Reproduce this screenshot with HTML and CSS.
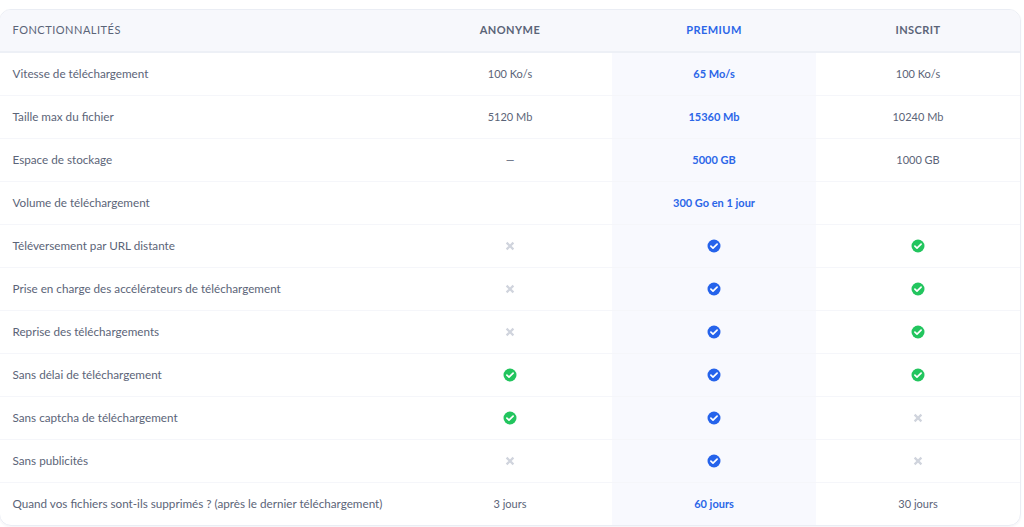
FILE: index.html
```
<!DOCTYPE html>
<html>
<head>
    <meta charset="utf-8">
    <link rel="stylesheet" href="styles.css">
</head>
<body>
    <svg class="defs" width="0" height="0">
        <symbol id="check" viewBox="0 0 14 14">
            <circle cx="7" cy="7" r="6.5" fill="currentColor"/>
            <path d="M3.9 7.2 6 9.2 10.1 5.2" fill="none" stroke="#fff" stroke-width="1.7" stroke-linecap="round" stroke-linejoin="round"/>
        </symbol>
        <symbol id="cross" viewBox="0 0 10 10">
            <path d="M1.6 1.6 8.4 8.4M8.4 1.6 1.6 8.4" fill="none" stroke="currentColor" stroke-width="2.2"/>
        </symbol>
    </svg>

    <div class="wrap">
        <table class="compare">
            <thead>
                <tr>
                    <th class="feature">FONCTIONNALITÉS</th>
                    <th>ANONYME</th>
                    <th class="premium">PREMIUM</th>
                    <th>INSCRIT</th>
                </tr>
            </thead>
            <tbody>
                <tr>
                    <td class="feature">Vitesse de téléchargement</td>
                    <td>100 Ko/s</td>
                    <td class="premium">65 Mo/s</td>
                    <td>100 Ko/s</td>
                </tr>
                <tr>
                    <td class="feature">Taille max du fichier</td>
                    <td>5120 Mb</td>
                    <td class="premium">15360 Mb</td>
                    <td>10240 Mb</td>
                </tr>
                <tr>
                    <td class="feature">Espace de stockage</td>
                    <td>—</td>
                    <td class="premium">5000 GB</td>
                    <td>1000 GB</td>
                </tr>
                <tr>
                    <td class="feature">Volume de téléchargement</td>
                    <td></td>
                    <td class="premium">300 Go en 1 jour</td>
                    <td></td>
                </tr>
                <tr>
                    <td class="feature">Téléversement par URL distante</td>
                    <td><svg class="icon no"><use href="#cross"/></svg></td>
                    <td class="premium"><svg class="icon yes"><use href="#check"/></svg></td>
                    <td><svg class="icon yes"><use href="#check"/></svg></td>
                </tr>
                <tr>
                    <td class="feature">Prise en charge des accélérateurs de téléchargement</td>
                    <td><svg class="icon no"><use href="#cross"/></svg></td>
                    <td class="premium"><svg class="icon yes"><use href="#check"/></svg></td>
                    <td><svg class="icon yes"><use href="#check"/></svg></td>
                </tr>
                <tr>
                    <td class="feature">Reprise des téléchargements</td>
                    <td><svg class="icon no"><use href="#cross"/></svg></td>
                    <td class="premium"><svg class="icon yes"><use href="#check"/></svg></td>
                    <td><svg class="icon yes"><use href="#check"/></svg></td>
                </tr>
                <tr>
                    <td class="feature">Sans délai de téléchargement</td>
                    <td><svg class="icon yes"><use href="#check"/></svg></td>
                    <td class="premium"><svg class="icon yes"><use href="#check"/></svg></td>
                    <td><svg class="icon yes"><use href="#check"/></svg></td>
                </tr>
                <tr>
                    <td class="feature">Sans captcha de téléchargement</td>
                    <td><svg class="icon yes"><use href="#check"/></svg></td>
                    <td class="premium"><svg class="icon yes"><use href="#check"/></svg></td>
                    <td><svg class="icon no"><use href="#cross"/></svg></td>
                </tr>
                <tr>
                    <td class="feature">Sans publicités</td>
                    <td><svg class="icon no"><use href="#cross"/></svg></td>
                    <td class="premium"><svg class="icon yes"><use href="#check"/></svg></td>
                    <td><svg class="icon no"><use href="#cross"/></svg></td>
                </tr>
                <tr>
                    <td class="feature">Quand vos fichiers sont-ils supprimés ? (après le dernier téléchargement)</td>
                    <td>3 jours</td>
                    <td class="premium">60 jours</td>
                    <td>30 jours</td>
                </tr>
            </tbody>
        </table>
    </div>
</body>
</html>
```

FILE: styles.css
```
html, body {
    height: 100%;
}

body {
    margin: 0;
    background-color: #fff;
    font-family: Lato, "Noto Sans", sans-serif;
    overflow: hidden;
}

.defs {
    display: block;
}

.wrap {
    width: 1020px;
    margin: 9px 0 0 -1px;
    border: 1px solid #eaedf4;
    border-radius: 12px;
    overflow: hidden;
    box-shadow: 0 1px 2px rgba(60, 70, 110, 0.06);
}

.compare {
    width: 100%;
    table-layout: fixed;
    border-collapse: collapse;
    font-size: 11px;
    color: #5b6478;
}

.compare th {
    height: 42px;
    padding: 0 0 2px;
    box-sizing: border-box;
    background-color: #f7f8fc;
    border-bottom: 2px solid #edf0f6;
    font-size: 11px;
    font-weight: 700;
    letter-spacing: 0.45px;
    color: #5b6478;
}

.compare th.feature {
    font-weight: 400;
    letter-spacing: 0.5px;
}

.compare td {
    height: 43px;
    padding: 0;
    box-sizing: border-box;
    text-align: center;
    border-top: 1px solid #f5f6fa;
}

.compare tbody tr:first-child td {
    border-top: 0;
}

.compare .feature {
    width: 408px;
    padding-left: 12.5px;
    text-align: left;
}

.compare td.feature {
    padding-bottom: 2px;
    font-size: 11.7px;
}

.compare td.premium {
    background-color: #f8f9fe;
    font-weight: 700;
    color: #2b66e8;
}

.compare th.premium {
    color: #2b66e8;
}

.icon {
    display: block;
    margin: 0 auto;
}

.yes {
    width: 14px;
    height: 14px;
    color: #22c55e;
}

.premium .yes {
    color: #2563eb;
}

.no {
    width: 10px;
    height: 10px;
    color: #d0d4dd;
}
```
